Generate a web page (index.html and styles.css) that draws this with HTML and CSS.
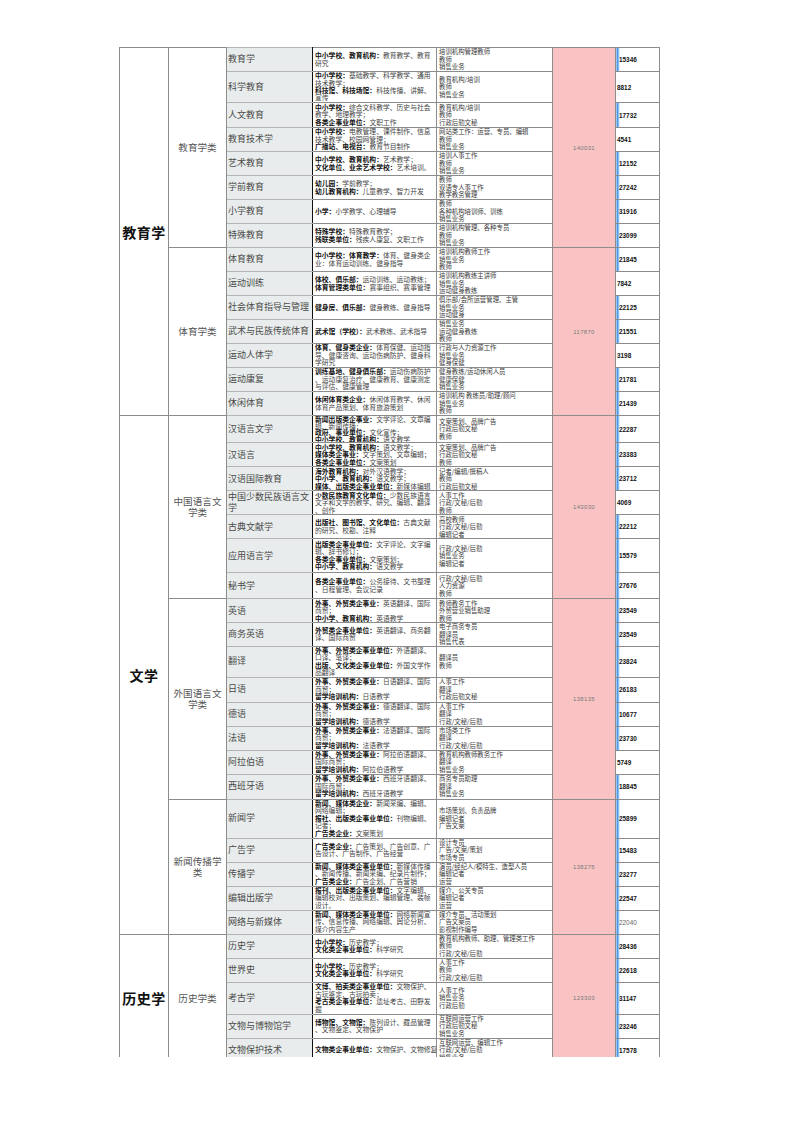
FILE: index.html
```html
<!DOCTYPE html>
<html lang="zh-CN">
<head>
<meta charset="utf-8">
<title>专业就业表</title>
<link rel="stylesheet" href="styles.css">
</head>
<body>
<div class="sheet">
<table class="grid">
<colgroup>
<col class="c-cat"><col class="c-sub"><col class="c-maj"><col class="c-unit"><col class="c-job"><col class="c-pink"><col class="c-num">
</colgroup>
<tbody>
<!-- 教育学类 -->
<tr class="h24"><td class="cat" rowspan="15">教育学</td><td class="sub" rowspan="8">教育学类</td><td class="maj">教育学</td><td class="unit"><b>中小学校、教育机构：</b>教育教学、教育研究</td><td class="job">培训机构管理教师<br>教师<br>销售业务</td><td class="pink" rowspan="8">140031</td><td class="num bar">15346</td></tr>
<tr class="h31"><td class="maj">科学教育</td><td class="unit"><b>中小学校：</b>基础教学、科学教学、通用技术教学；<br><b>科技馆、科技场馆：</b>科技传播、讲解、宣传</td><td class="job">教育机构/培训<br>教师<br>销售业务</td><td class="num">8812</td></tr>
<tr class="h25"><td class="maj">人文教育</td><td class="unit"><b>中小学校：</b>综合文科教学、历史与社会教学、地理教学；<br><b>各类企事业单位：</b>文职工作</td><td class="job">教育机构/培训<br>教师<br>行政后勤文秘</td><td class="num bar">17732</td></tr>
<tr class="h24"><td class="maj">教育技术学</td><td class="unit"><b>中小学校：</b>电教管理、课件制作、信息技术教学、校园网管理；<br><b>广播站、电视台：</b>教育节目制作</td><td class="job">网站类工作：运营、专员、编辑<br>教师<br>销售业务</td><td class="num">4541</td></tr>
<tr class="h24"><td class="maj">艺术教育</td><td class="unit"><b>中小学校、教育机构：</b>艺术教学；<br><b>文化单位、业余艺术学校：</b>艺术培训。</td><td class="job">培训人事工作<br>教师<br>销售业务</td><td class="num bar">12152</td></tr>
<tr class="h24"><td class="maj">学前教育</td><td class="unit"><b>幼儿园：</b>学前教学；<br><b>幼儿教育机构：</b>儿童教学、智力开发</td><td class="job">教师<br>双语专人事工作<br>教学教务管理</td><td class="num bar">27242</td></tr>
<tr class="h24"><td class="maj">小学教育</td><td class="unit"><b>小学：</b>小学教学、心理辅导</td><td class="job">教师<br>各种机构培训师、训练<br>销售业务</td><td class="num bar">31916</td></tr>
<tr class="h24"><td class="maj">特殊教育</td><td class="unit"><b>特殊学校：</b>特殊教育教学；<br><b>残联类单位：</b>残疾人康复、文职工作</td><td class="job">培训机构管理、各种专员<br>教师<br>销售业务</td><td class="num bar">23099</td></tr>
<!-- 体育学类 -->
<tr class="h24"><td class="sub" rowspan="7">体育学类</td><td class="maj">体育教育</td><td class="unit"><b>中小学校：体育教学：</b>体育、健身类企业：体育运动训练、健身指导</td><td class="job">培训机构教师工作<br>销售业务<br>教师</td><td class="pink" rowspan="7">117870</td><td class="num bar">21845</td></tr>
<tr class="h24"><td class="maj">运动训练</td><td class="unit"><b>体校、俱乐部：</b>运动训练、运动教练；<br><b>体育管理类单位：</b>赛事组织、赛事管理</td><td class="job">培训机构教练主讲师<br>销售业务<br>运动健身教练</td><td class="num">7842</td></tr>
<tr class="h24"><td class="maj">社会体育指导与管理</td><td class="unit"><b>健身房、俱乐部：</b>健身教练、健身指导</td><td class="job">俱乐部/会所运营管理、主管<br>销售业务<br>运动健身</td><td class="num bar">22125</td></tr>
<tr class="h24"><td class="maj">武术与民族传统体育</td><td class="unit"><b>武术馆（学校）：</b>武术教练、武术指导</td><td class="job">销售业务<br>运动健身教练<br>教师</td><td class="num bar">21551</td></tr>
<tr class="h24"><td class="maj">运动人体学</td><td class="unit"><b>体育、健身类企业：</b>体育保健、运动指导、健康咨询、运动伤病防护、健身科学研究</td><td class="job">行政与人力资源工作<br>销售业务<br>健身保健</td><td class="num">3198</td></tr>
<tr class="h24"><td class="maj">运动康复</td><td class="unit"><b>训练基地、健身俱乐部：</b>运动伤病防护、运动康复治疗、健康教育、健康测定与评估、健康管理</td><td class="job">健身教练/运动休闲人员<br>健康保健<br>销售业务</td><td class="num bar">21781</td></tr>
<tr class="h24"><td class="maj">休闲体育</td><td class="unit"><b>休闲体育类企业：</b>休闲体育教学、休闲体育产品策划、体育旅游策划</td><td class="job">培训机构 教练员/助理/顾问<br>销售业务<br>教师</td><td class="num bar">21439</td></tr>
<!-- 中国语言文学类 -->
<tr class="h27"><td class="cat" rowspan="20">文学</td><td class="sub" rowspan="7">中国语言文学类</td><td class="maj">汉语言文学</td><td class="unit tight"><b>新闻出版类企事业：</b>文学评论、文章编辑、新闻传播；<br><b>政府、事业单位：</b>文化宣传；<br><b>中小学校、教育机构：</b>语文教学</td><td class="job">文案策划、品牌广告<br>行政后勤文秘<br>教师</td><td class="pink" rowspan="7">143030</td><td class="num bar">22287</td></tr>
<tr class="h24"><td class="maj">汉语言</td><td class="unit"><b>中小学校、教育机构：</b>语文教学；<br><b>媒体类企事业：</b>文字策划、文章编辑；<br><b>各类企事业单位：</b>文案策划</td><td class="job">文案策划、品牌广告<br>行政后勤文秘<br>教师</td><td class="num bar">23383</td></tr>
<tr class="h24"><td class="maj">汉语国际教育</td><td class="unit"><b>海外教育机构：</b>对外汉语教学；<br><b>中小学、教育机构：</b>语文教学；<br><b>媒体、出版类企事业单位：</b>新媒体编辑</td><td class="job">记者/编辑/撰稿人<br>教师<br>行政后勤文秘</td><td class="num bar">23712</td></tr>
<tr class="h24"><td class="maj">中国少数民族语言文学</td><td class="unit"><b>少数民族教育文化单位：</b>少数民族语言文字和文学的教学、研究、编辑、翻译、创作</td><td class="job">人事工作<br>行政/文秘/后勤<br>教师</td><td class="num">4069</td></tr>
<tr class="h24"><td class="maj">古典文献学</td><td class="unit"><b>出版社、图书馆、文化单位：</b>古典文献的研究、校勘、注释</td><td class="job">高校教师<br>行政/文秘/后勤<br>编辑记者</td><td class="num bar">22212</td></tr>
<tr class="h34"><td class="maj">应用语言学</td><td class="unit"><b>出版类企事业单位：</b>文字评论、文字编辑、辞书修订；<br><b>各类企事业单位：</b>文案策划；<br><b>中小学、教育机构：</b>语文教学</td><td class="job">行政/文秘/后勤<br>销售业务<br>编辑记者</td><td class="num bar">15579</td></tr>
<tr class="h26"><td class="maj">秘书学</td><td class="unit"><b>各类企事业单位：</b>公务接待、文书整理、日程管理、会议记录</td><td class="job">行政/文秘/后勤<br>人力资源<br>教师</td><td class="num bar">27676</td></tr>
<!-- 外国语言文学类 -->
<tr class="h24"><td class="sub" rowspan="8">外国语言文学类</td><td class="maj">英语</td><td class="unit"><b>外事、外贸类企事业：</b>英语翻译、国际商贸；<br><b>中小学、教育机构：</b>英语教学</td><td class="job">教师教务工作<br>外贸营业销售助理<br>教师</td><td class="pink" rowspan="8">138135</td><td class="num bar">23549</td></tr>
<tr class="h22"><td class="maj">商务英语</td><td class="unit"><b>外贸类企事业单位：</b>英语翻译、商务翻译、国际商贸</td><td class="job">电子商务专员<br>翻译员<br>销售代表</td><td class="num bar">23549</td></tr>
<tr class="h31"><td class="maj">翻译</td><td class="unit"><b>外事、外贸类企事业单位：</b>外语翻译、口译、笔译；<br><b>出版、文化类企事业单位：</b>外国文学作品翻译</td><td class="job">翻译员<br>教师</td><td class="num bar">23824</td></tr>
<tr class="h25"><td class="maj">日语</td><td class="unit"><b>外事、外贸类企事业：</b>日语翻译、国际商贸；<br><b>留学培训机构：</b>日语教学</td><td class="job">人事工作<br>翻译<br>行政后勤文秘</td><td class="num bar">26183</td></tr>
<tr class="h24"><td class="maj">德语</td><td class="unit"><b>外事、外贸类企事业：</b>德语翻译、国际商贸；<br><b>留学培训机构：</b>德语教学</td><td class="job">人事工作<br>翻译<br>行政/文秘/后勤</td><td class="num bar">10677</td></tr>
<tr class="h24"><td class="maj">法语</td><td class="unit"><b>外事、外贸类企事业：</b>法语翻译、国际商贸；<br><b>留学培训机构：</b>法语教学</td><td class="job">市场类工作<br>翻译<br>行政/文秘/后勤</td><td class="num bar">23730</td></tr>
<tr class="h24"><td class="maj">阿拉伯语</td><td class="unit"><b>外事、外贸类企事业：</b>阿拉伯语翻译、国际商贸；<br><b>留学培训机构：</b>阿拉伯语教学</td><td class="job">教育机构教师教务工作<br>翻译<br>销售业务</td><td class="num">5749</td></tr>
<tr class="h25"><td class="maj">西班牙语</td><td class="unit"><b>外事、外贸类企事业：</b>西班牙语翻译、国际商贸；<br><b>留学培训机构：</b>西班牙语教学</td><td class="job">商务专员助理<br>翻译<br>销售业务</td><td class="num bar">18845</td></tr>
<!-- 新闻传播学类 -->
<tr class="h39"><td class="sub" rowspan="5">新闻传播学类</td><td class="maj">新闻学</td><td class="unit"><b>新闻、媒体类企业：</b>新闻采编、编辑、网络编辑；<br><b>报社、出版类企事业单位：</b>刊物编辑、记者；<br><b>广告类企业：</b>文案策划</td><td class="job">市场策划、负责品牌<br>编辑记者<br>广告文案</td><td class="pink" rowspan="5">138275</td><td class="num bar">25899</td></tr>
<tr class="h24"><td class="maj">广告学</td><td class="unit"><b>广告类企业：</b>广告策划、广告创意、广告设计、广告制作、广告经营</td><td class="job">设计专员<br>广告/文案/策划<br>市场专员</td><td class="num bar">15483</td></tr>
<tr class="h24"><td class="maj">传播学</td><td class="unit"><b>新闻、媒体类企事业单位：</b>新媒体传播、新闻传播、新闻采编、纪录片制作；<br><b>广告类企业：</b>广告企划、广告营销</td><td class="job">演员/经纪人/模特生、造型人员<br>编辑记者<br>运营</td><td class="num bar">23277</td></tr>
<tr class="h24"><td class="maj">编辑出版学</td><td class="unit"><b>报刊、出版类企事业单位：</b>文字编辑、编辑校对、出版策划、编辑管理、装帧设计。</td><td class="job">媒介、公关专员<br>编辑记者<br>运营</td><td class="num bar">22547</td></tr>
<tr class="h24"><td class="maj">网络与新媒体</td><td class="unit"><b>新闻、媒体类企事业单位：</b>网络新闻宣传、信息传播、网络编辑、舆论分析、媒介内容生产</td><td class="job">媒介专员、活动策划<br>广告文案员<br>影视制作编导</td><td class="num bar light">22040</td></tr>
<!-- 历史学类 -->
<tr class="h24"><td class="cat" rowspan="5">历史学</td><td class="sub" rowspan="5">历史学类</td><td class="maj">历史学</td><td class="unit"><b>中小学校：</b>历史教学；<br><b>文化类企事业单位：</b>科学研究</td><td class="job">教育机构教师、助理、管理类工作<br>教师<br>行政/文秘/后勤</td><td class="pink" rowspan="5">123303</td><td class="num bar">28436</td></tr>
<tr class="h24"><td class="maj">世界史</td><td class="unit"><b>中小学校：</b>历史教学；<br><b>文化类企事业单位：</b>科学研究</td><td class="job">人事工作<br>教师<br>行政/文秘/后勤</td><td class="num bar">22618</td></tr>
<tr class="h32"><td class="maj">考古学</td><td class="unit"><b>文博、拍卖类企事业单位：</b>文物保护、古玩鉴定、古玩拍卖；<br><b>考古类企事业单位：</b>遗址考古、田野发掘</td><td class="job">人事工作<br>销售业务<br>行政后勤</td><td class="num bar">31147</td></tr>
<tr class="h24"><td class="maj">文物与博物馆学</td><td class="unit"><b>博物馆、文物馆：</b>陈列设计、藏品管理、文物鉴定、文物保护</td><td class="job">互联网运营工作<br>行政后勤文秘<br>销售业务</td><td class="num bar">23246</td></tr>
<tr class="h24"><td class="maj">文物保护技术</td><td class="unit nowrap"><b>文物类企事业单位：</b>文物保护、文物修复</td><td class="job">互联网运营、编辑工作<br>行政/文秘/后勤<br>销售业务</td><td class="num bar">17578</td></tr>
</tbody>
</table>
</div>
</body>
</html>
```
FILE: styles.css
```css
html, body {
  margin: 0;
  padding: 0;
  background: #ffffff;
}

.sheet {
  margin: 47px 0 0 119px;
  width: 541px;
  height: 1010px;
  overflow: hidden;
}

.grid {
  border-collapse: collapse;
  table-layout: fixed;
  width: 541px;
  font-family: "Noto Sans CJK SC", "Liberation Sans", sans-serif;
  color: #333;
}

.c-cat { width: 49px; }
.c-sub { width: 58px; }
.c-maj { width: 86px; }
.c-unit { width: 124px; }
.c-job { width: 116px; }
.c-pink { width: 63px; }
.c-num { width: 44px; }

.grid td {
  border: 1px solid #8c8c8c;
  padding: 0 2px;
  vertical-align: middle;
  overflow: hidden;
}

.h22 { height: 22px; }
.h24 { height: 24px; }
.h25 { height: 25px; }
.h26 { height: 26px; }
.h27 { height: 27px; }
.h31 { height: 31px; }
.h32 { height: 32px; }
.h34 { height: 34px; }
.h39 { height: 39px; }

.cat {
  font-size: 14px;
  font-weight: 700;
  color: #111;
  text-align: center;
  padding: 0;
  letter-spacing: 0.5px;
}

.sub {
  font-size: 9.6px;
  color: #555;
  text-align: center;
  line-height: 11px;
  padding: 0 3px;
}

.grid td.maj {
  background: #e8ecec;
  font-size: 9px;
  color: #4a4a4a;
  line-height: 10.5px;
  padding: 0 0 0 1px;
  border-color: #b5b5b5;
  border-right: 1px solid #111;
}

.unit {
  font-size: 6.8px;
  line-height: 7.4px;
  color: #444;
  line-break: anywhere;
}

.unit.tight {
  line-height: 6.6px;
}

.unit b {
  font-weight: 700;
  color: #111;
}

.unit.nowrap {
  white-space: nowrap;
}

.job {
  font-size: 6.4px;
  line-height: 7.4px;
  color: #3a3a3a;
}

.grid td.pink {
  background: #f9c3c3;
  text-align: center;
  font-family: "Liberation Sans", sans-serif;
  font-size: 6px;
  color: #7a7a7a;
  letter-spacing: 0.3px;
}

.grid td.num {
  font-family: "Liberation Sans", sans-serif;
  font-size: 6.4px;
  font-weight: 700;
  color: #111;
  padding: 0 0 0 1px;
}

.grid td.num.bar {
  background: linear-gradient(to right, #2f7fdc 0, #5aa4ec 1.5px, #b9dcf8 2.5px, #ffffff 3px);
  padding-left: 3px;
}

.grid td.num.light {
  font-weight: 400;
  color: #666;
}
```
